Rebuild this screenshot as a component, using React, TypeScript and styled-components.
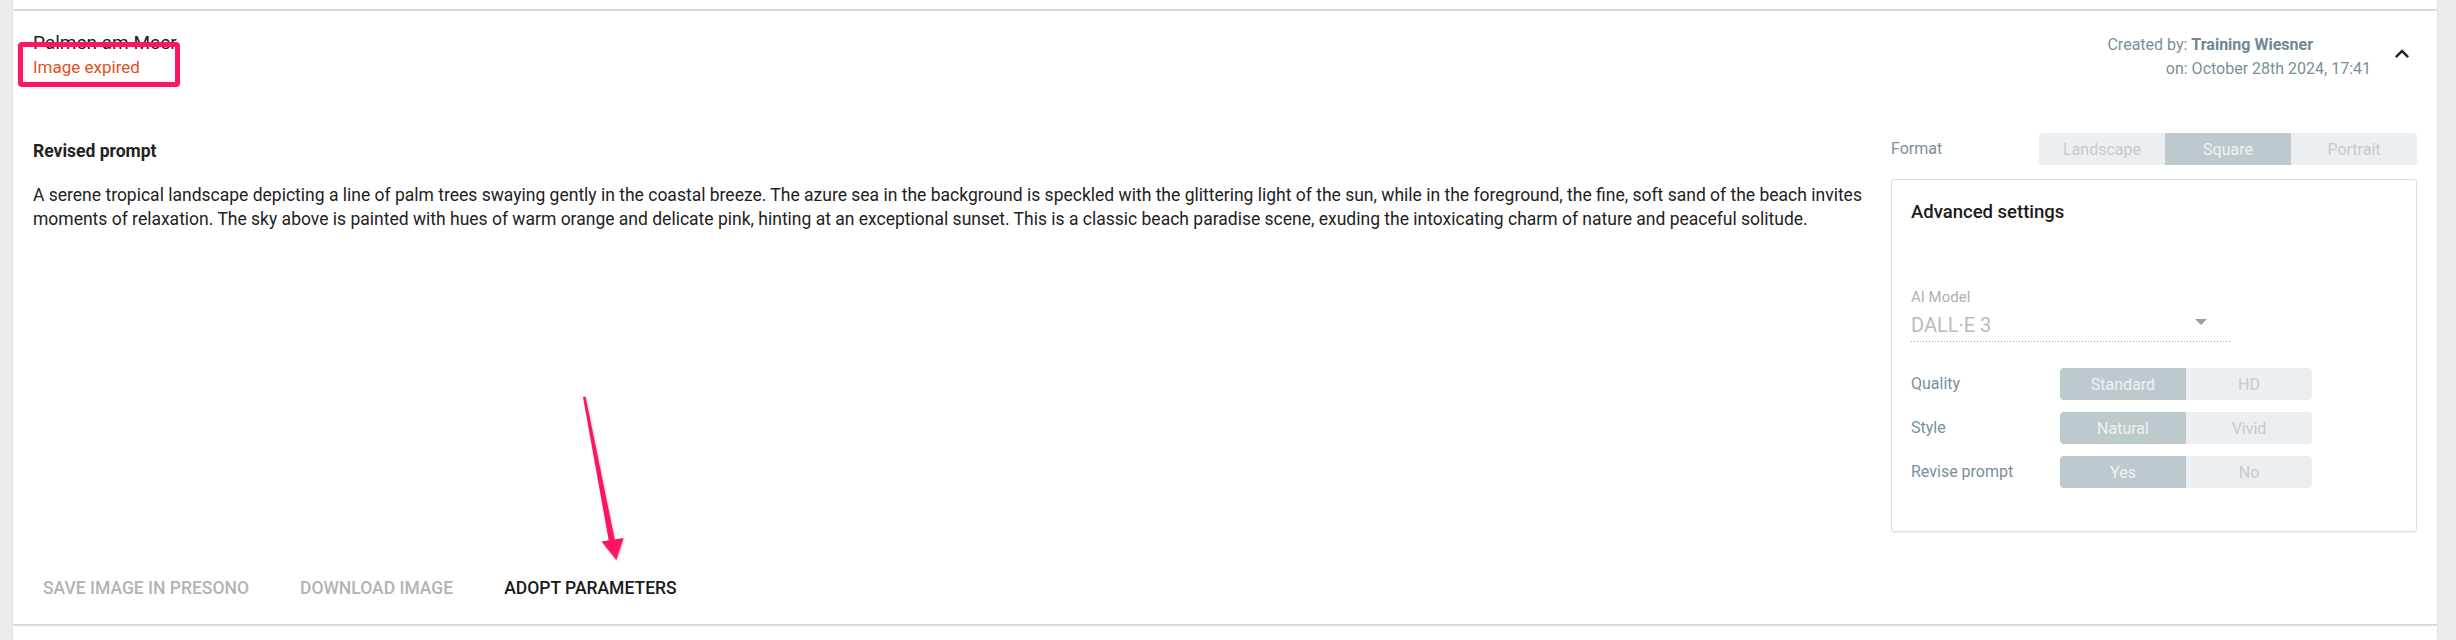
import React from 'react'
import styled, { createGlobalStyle } from 'styled-components'

const GlobalStyle = createGlobalStyle`
  html, body {
    margin: 0;
    padding: 0;
    background: #ececec;
  }
  body {
    font-family: Roboto, 'Liberation Sans', Arial, sans-serif;
    color: #222;
  }
  * {
    box-sizing: border-box;
  }
`

const Page = styled.div`
  width: 2456px;
  height: 640px;
  overflow: hidden;
  padding: 0 19px 0 13px;
  display: flex;
  flex-direction: column;
  gap: 2px;
`

const CardStub = styled.div<{ $height: number }>`
  height: ${(p) => p.$height}px;
  flex-shrink: 0;
  background: #fff;
  box-shadow: 0 1px 2px rgba(0, 0, 0, 0.14);
`

const Card = styled.section`
  position: relative;
  flex-shrink: 0;
  height: 613px;
  background: #fff;
  box-shadow: 0 1px 2px rgba(0, 0, 0, 0.14);
  display: flex;
  flex-direction: column;
`

const Header = styled.header`
  display: flex;
  align-items: flex-start;
  padding: 20px 21px 0 20px;
`

const TitleBlock = styled.div`
  flex: 1;
`

const Title = styled.div`
  font-size: 19px;
  line-height: 24px;
  color: #222;
`

const Expired = styled.div`
  font-size: 17px;
  line-height: 24px;
  color: #e2501d;
`

const Meta = styled.div`
  margin-top: 2px;
  display: flex;
  flex-direction: column;
  align-items: flex-end;
  font-size: 16px;
  line-height: 24px;
  color: #78909c;

  b {
    font-weight: 700;
    color: #6f8893;
  }
`

const MetaLine = styled.div<{ $indent?: number }>`
  padding-right: ${(p) => p.$indent || 0}px;
  white-space: nowrap;
`

const ToggleButton = styled.button`
  margin: 9px 0 0 17px;
  width: 28px;
  height: 28px;
  padding: 0;
  border: none;
  background: none;
  color: #222;
  display: flex;
`

const Body = styled.div`
  margin-top: 52px;
  padding: 0 20px;
  display: flex;
  gap: 16px;
`

const PromptColumn = styled.div`
  flex: 1;
  padding-top: 6px;
`

const PromptHeading = styled.h3`
  margin: 0;
  font-size: 17.5px;
  line-height: 24px;
  font-weight: 700;
  color: #222;
`

const PromptText = styled.p`
  margin: 20px 0 0;
  font-size: 17.5px;
  line-height: 24px;
  color: #222;
`

const SettingsColumn = styled.div`
  width: 526px;
  flex-shrink: 0;
`

const FormatRow = styled.div`
  display: grid;
  grid-template-columns: 148px auto;
  align-items: center;
`

const FieldLabel = styled.span`
  font-size: 16px;
  line-height: 24px;
  color: #78909c;
`

const Segmented = styled.div`
  display: flex;
  border-radius: 4px;
  overflow: hidden;
  width: max-content;
`

const Segment = styled.div<{ $active?: boolean }>`
  width: 126px;
  height: 32px;
  display: flex;
  align-items: center;
  justify-content: center;
  font-size: 16px;
  background: ${(p) => (p.$active ? '#bec9cd' : '#eceff1')};
  color: ${(p) => (p.$active ? '#eef2f3' : '#c3ccd0')};
`

const AdvancedCard = styled.div`
  margin-top: 14px;
  height: 353px;
  border: 1px solid #dcdcdc;
  border-radius: 3px;
  box-shadow: 0 1px 1px rgba(0, 0, 0, 0.06);
  padding: 20px 20px 0 19px;
`

const AdvancedTitle = styled.h4`
  margin: 0;
  font-size: 18.5px;
  line-height: 24px;
  font-weight: 500;
  color: #1c1c1c;
`

const SelectField = styled.div`
  margin-top: 64px;
  width: 320px;
`

const SelectLabel = styled.div`
  font-size: 15px;
  line-height: 18px;
  color: #b1b1b1;
`

const SelectValue = styled.div`
  margin-top: 7px;
  padding-bottom: 5px;
  display: flex;
  align-items: center;
  justify-content: space-between;
  font-size: 20px;
  line-height: 24px;
  color: #bababa;
  background-image: linear-gradient(to right, #a9a9a9 0%, #a9a9a9 50%, transparent 50%);
  background-size: 3px 1px;
  background-repeat: repeat-x;
  background-position: bottom left;

  svg {
    margin-right: 24px;
    margin-top: -6px;
  }
`

const SettingRows = styled.div`
  margin-top: 26px;
  display: flex;
  flex-direction: column;
  gap: 12px;
`

const SettingRow = styled.div`
  display: grid;
  grid-template-columns: 149px auto;
  align-items: center;
`

const Actions = styled.div`
  margin-top: 33px;
  padding: 0 20px;
  display: flex;
  gap: 31px;
`

const ActionButton = styled.button<{ $enabled?: boolean }>`
  height: 45px;
  padding: 0 10px;
  border: none;
  background: none;
  font-family: Roboto, 'Liberation Sans', Arial, sans-serif;
  font-size: 17.5px;
  font-weight: 500;
  text-transform: uppercase;
  color: ${(p) => (p.$enabled ? '#1a1a1a' : '#b3b3b3')};
`

const Highlight = styled.div`
  position: absolute;
  left: 5px;
  top: 31px;
  width: 162px;
  height: 45px;
  border: 5px solid #ff1660;
  border-radius: 4px;
`

const ArrowMark = styled.svg`
  position: absolute;
  left: 557px;
  top: 379px;
  filter: drop-shadow(1px 1px 1px rgba(0, 0, 0, 0.25));
`

const segments = (options: string[], active: number) => (
  <Segmented>
    {options.map((o, i) => (
      <Segment key={o} $active={i === active}>
        {o}
      </Segment>
    ))}
  </Segmented>
)

const settings = [
  { label: 'Quality', options: ['Standard', 'HD'] },
  { label: 'Style', options: ['Natural', 'Vivid'] },
  { label: 'Revise prompt', options: ['Yes', 'No'] },
]

const prompt =
  'A serene tropical landscape depicting a line of palm trees swaying gently in the coastal breeze. The azure sea in the background is speckled with the glittering light of the sun, while in the foreground, the fine, soft sand of the beach invites moments of relaxation. The sky above is painted with hues of warm orange and delicate pink, hinting at an exceptional sunset. This is a classic beach paradise scene, exuding the intoxicating charm of nature and peaceful solitude.'

const App = () => {
  return (
    <>
      <GlobalStyle />
      <Page>
        <CardStub $height={9} />
        <Card>
          <Header>
            <TitleBlock>
              <Title>Palmen am Meer</Title>
              <Expired>Image expired</Expired>
            </TitleBlock>
            <Meta>
              <MetaLine $indent={58}>
                Created by: <b>Training Wiesner</b>
              </MetaLine>
              <MetaLine>on: October 28th 2024, 17:41</MetaLine>
            </Meta>
            <ToggleButton aria-label='collapse'>
              <svg width='28' height='28' viewBox='0 0 24 24' fill='currentColor'>
                <path d='M12 8l-6 6 1.41 1.41L12 10.83l4.59 4.58L18 14z' />
              </svg>
            </ToggleButton>
          </Header>

          <Body>
            <PromptColumn>
              <PromptHeading>Revised prompt</PromptHeading>
              <PromptText>{prompt}</PromptText>
            </PromptColumn>

            <SettingsColumn>
              <FormatRow>
                <FieldLabel>Format</FieldLabel>
                {segments(['Landscape', 'Square', 'Portrait'], 1)}
              </FormatRow>

              <AdvancedCard>
                <AdvancedTitle>Advanced settings</AdvancedTitle>
                <SelectField>
                  <SelectLabel>AI Model</SelectLabel>
                  <SelectValue>
                    <span>DALL·E 3</span>
                    <svg width='12' height='6' viewBox='0 0 12 6'>
                      <path d='M0 0h12L6 6z' fill='#9e9e9e' />
                    </svg>
                  </SelectValue>
                </SelectField>
                <SettingRows>
                  {settings.map((s) => (
                    <SettingRow key={s.label}>
                      <FieldLabel>{s.label}</FieldLabel>
                      {segments(s.options, 0)}
                    </SettingRow>
                  ))}
                </SettingRows>
              </AdvancedCard>
            </SettingsColumn>
          </Body>

          <Actions>
            <ActionButton>Save image in Presono</ActionButton>
            <ActionButton>Download image</ActionButton>
            <ActionButton $enabled>Adopt parameters</ActionButton>
          </Actions>

          <Highlight />
          <ArrowMark width='60' height='180' viewBox='0 0 60 180'>
            <path d='M13 7 L15.5 6.5 L45 151 L39 152 Z' fill='#ff1464' />
            <path d='M31.5 151.5 L53.5 148 L46.3 170 Z' fill='#ff1464' />
          </ArrowMark>
        </Card>
        <CardStub $height={20} />
      </Page>
    </>
  )
}

export default App
